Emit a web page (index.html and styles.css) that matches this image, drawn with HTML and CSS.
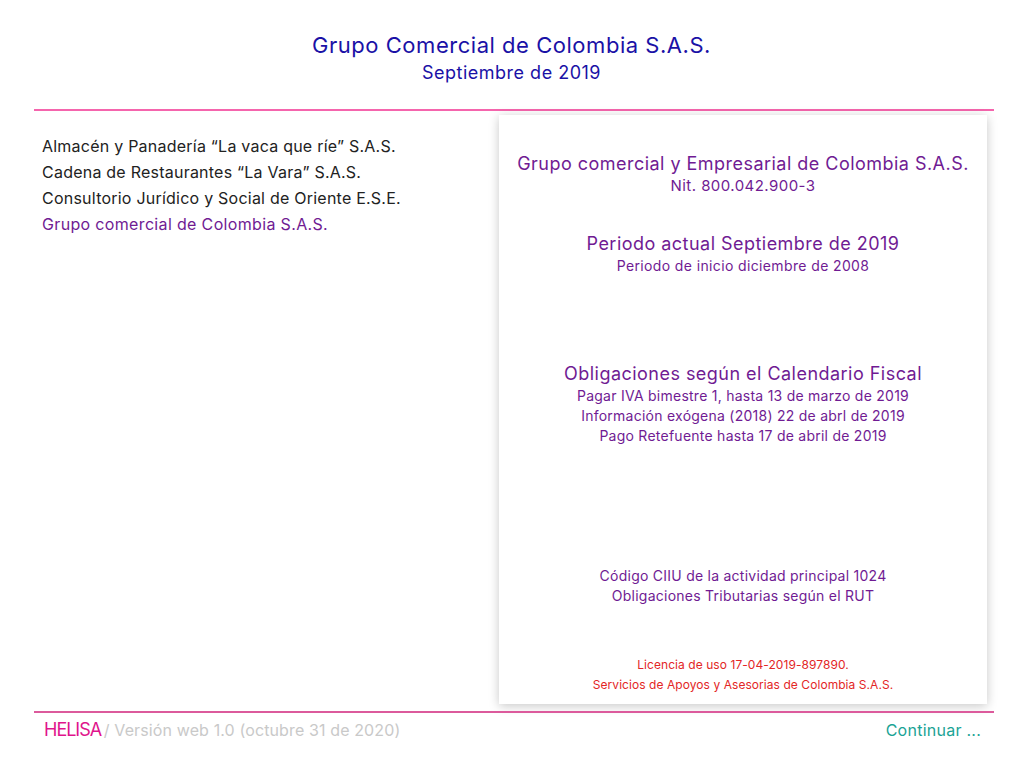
FILE: index.html
```html
<!DOCTYPE html>
<html lang="es">
<head>
<meta charset="utf-8">
<title>Grupo Comercial de Colombia S.A.S.</title>
<link rel="stylesheet" href="styles.css">
</head>
<body>
<div class="page">
  <header class="top">
    <h1 class="title">Grupo Comercial de Colombia S.A.S.</h1>
    <p class="period">Septiembre de 2019</p>
  </header>
  <main class="content">
    <ul class="companies">
      <li>Almacén y Panadería “La vaca que ríe” S.A.S.</li>
      <li>Cadena de Restaurantes “La Vara” S.A.S.</li>
      <li>Consultorio Jurídico y Social de Oriente E.S.E.</li>
      <li class="active">Grupo comercial de Colombia S.A.S.</li>
    </ul>
    <section class="card">
      <div class="block b1">
        <h2>Grupo comercial y Empresarial de Colombia S.A.S.</h2>
        <p class="nit">Nit. 800.042.900-3</p>
      </div>
      <div class="block b2">
        <h2>Periodo actual Septiembre de 2019</h2>
        <p class="sub">Periodo de inicio diciembre de 2008</p>
      </div>
      <div class="block b3">
        <h2>Obligaciones según el Calendario Fiscal</h2>
        <p>Pagar IVA bimestre 1, hasta 13 de marzo de 2019</p>
        <p>Información exógena (2018) 22 de abrl de 2019</p>
        <p>Pago Retefuente hasta 17 de abril de 2019</p>
      </div>
      <div class="block b4">
        <p>Código CIIU de la actividad principal 1024</p>
        <p>Obligaciones Tributarias según el RUT</p>
      </div>
      <div class="block b5">
        <p>Licencia de uso 17-04-2019-897890.</p>
        <p>Servicios de Apoyos y Asesorias de Colombia S.A.S.</p>
      </div>
    </section>
  </main>
  <footer class="bottom">
    <div class="brandline"><span class="brand">HELISA</span><span class="version"> / Versión web 1.0 (octubre 31 de 2020)</span></div>
    <a class="next">Continuar ...</a>
  </footer>
</div>
</body>
</html>
```
FILE: styles.css
```css
* { box-sizing: border-box; }
html, body { margin: 0; padding: 0; background: #fff; }
body { font-family: Inter, "Liberation Sans", sans-serif; }
.page { width: 1024px; height: 768px; padding: 0 30px 0 34px; display: flex; flex-direction: column; overflow: hidden; }
.top { height: 111px; border-bottom: 2px solid #f565ad; padding: 32px 5px 0 0; text-align: center; color: #1a11a6; }
.title { margin: 0; font-size: 22px; line-height: 26px; font-weight: 400; letter-spacing: .53px; }
.period { margin: 3px 0 0; font-size: 18px; line-height: 24px; letter-spacing: .5px; }
.content { display: flex; height: 600px; }
.companies { list-style: none; margin: 0; padding: 22px 0 0 8px; width: 465px; font-size: 16px; line-height: 26px; letter-spacing: .23px; color: #222; }
.companies .active { color: #701b93; letter-spacing: .34px; }
.card { width: 488px; height: 589px; margin-top: 4px; background: #fff; box-shadow: 0 2px 10px rgba(0,0,0,.22); text-align: center; color: #701b93; display: flex; flex-direction: column; }
.block h2 { margin: 0; font-size: 18px; line-height: 24px; font-weight: 400; letter-spacing: .47px; }
.block p { margin: 0; font-size: 14px; line-height: 20px; letter-spacing: .25px; }
.block .nit { font-size: 15px; line-height: 20px; letter-spacing: .45px; }
.block .sub { letter-spacing: .37px; }
.b1 { margin-top: 37px; }
.b2 { margin-top: 36px; }
.b3 { margin-top: 86px; }
.b4 { margin-top: 120px; }
.b5 { margin-top: 49px; color: #e32626; }
.block.b5 p { font-size: 12px; letter-spacing: .06px; }
.bottom { height: 57px; border-top: 2px solid #dc5a9c; display: flex; justify-content: space-between; align-items: flex-start; padding: 6px 13px 0 10px; font-size: 16px; line-height: 22px; }
.brand { color: #e0148c; font-size: 18px; letter-spacing: -1px; }
.version { color: #c9c9c9; letter-spacing: .12px; margin-left: -2px; }
.next { color: #1aa395; letter-spacing: .25px; }
```
